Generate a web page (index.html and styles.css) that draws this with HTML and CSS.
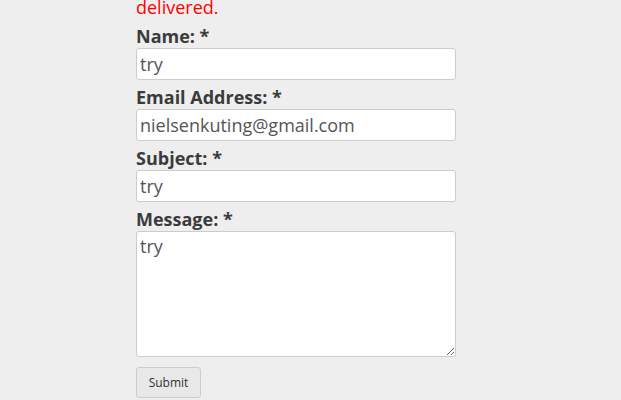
FILE: index.html
```
<!DOCTYPE html>
<html>
<head>
<meta charset="utf-8">
<link rel="stylesheet" href="styles.css">
</head>
<body>
<div class="page">
  <form class="form">
    <p class="error">delivered.</p>
    <label class="label" for="name">Name: *</label>
    <input class="field" id="name" type="text" value="try">
    <label class="label" for="email">Email Address: *</label>
    <input class="field" id="email" type="text" value="nielsenkuting@gmail.com">
    <label class="label" for="subject">Subject: *</label>
    <input class="field" id="subject" type="text" value="try">
    <label class="label" for="message">Message: *</label>
    <textarea class="area" id="message">try</textarea>
    <button class="submit" type="button">Submit</button>
  </form>
</div>
</body>
</html>
```
FILE: styles.css
```
html, body {
  margin: 0;
  padding: 0;
  background: #eeeeee;
  overflow: hidden;
}
.page {
  padding-left: 136px;
  margin-top: -5px;
  font-family: "Open Sans", sans-serif;
}
.form {
  width: 320px;
  display: flex;
  flex-direction: column;
  align-items: flex-start;
}
.error {
  margin: 0;
  color: #ff0000;
  font-size: 18px;
  line-height: 24px;
}
.label {
  display: block;
  margin-top: 5px;
  font-size: 18px;
  line-height: 24px;
  font-weight: 700;
  color: #3b3b3b;
}
.field, .area {
  box-sizing: border-box;
  width: 320px;
  margin: 0;
  border: 1px solid #cccccc;
  border-radius: 3px;
  background: #ffffff;
  font-family: "Open Sans", sans-serif;
  font-size: 18px;
  color: #555555;
  padding: 2px 3px;
  outline: none;
}
.field {
  height: 32px;
}
.area {
  height: 126px;
  line-height: 24px;
  padding: 2px 3px;
  resize: both;
}
.submit {
  margin-top: 10px;
  box-sizing: border-box;
  width: 65px;
  height: 31px;
  border: 1px solid #cccccc;
  border-radius: 3px;
  background: #e8e8e8;
  font-family: "Open Sans", sans-serif;
  font-size: 12px;
  color: #333333;
  padding: 0;
}
```
